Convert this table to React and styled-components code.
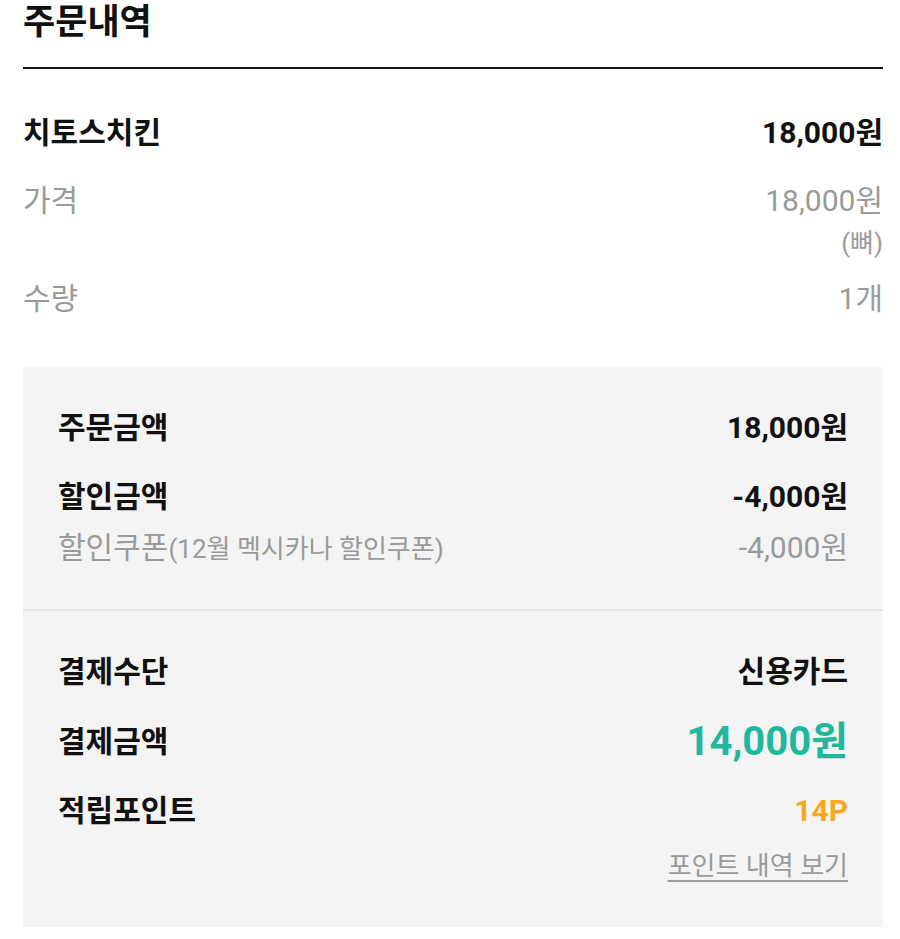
import React from "react";
import styled, { createGlobalStyle } from "styled-components";

const Global = createGlobalStyle`
  html, body { margin: 0; padding: 0; background: #fff; }
  body { font-family: Roboto, "Noto Sans CJK KR", sans-serif; color: #111; }
  * { box-sizing: border-box; }
`;

const Page = styled.div`
  padding: 0 17px 0 23px;
  width: 900px;
`;

const Header = styled.div`
  padding-bottom: 21px;
  border-bottom: 2px solid #141414;
`;

const Title = styled.h1`
  margin: 0;
  font-size: 35px;
  line-height: 46px;
  font-weight: 700;
  color: #111;
`;

const Items = styled.div`
  display: flex;
  flex-direction: column;
  padding: 44px 0 48px;
`;

const Row = styled.div`
  display: flex;
  justify-content: space-between;
  align-items: flex-start;
  margin-top: ${(p) => p.$mt || 0}px;
`;

const Label = styled.div`
  font-size: ${(p) => p.$size || 30}px;
  line-height: ${(p) => p.$lh || 40}px;
  font-weight: ${(p) => (p.$bold ? 700 : 400)};
  color: ${(p) => (p.$muted ? "#9a9a9a" : "#111")};
  white-space: nowrap;
`;

const Small = styled.span`
  font-size: 26px;
`;

const ValueCol = styled.div`
  display: flex;
  flex-direction: column;
  align-items: flex-end;
`;

const Value = styled.div`
  font-size: ${(p) => p.$size || 30}px;
  line-height: ${(p) => p.$lh || 40}px;
  font-weight: ${(p) => (p.$bold ? 700 : 400)};
  color: ${(p) => p.$color || "#111"};
  text-align: right;
  white-space: nowrap;
  margin-top: ${(p) => p.$mt || 0}px;
`;

const Box = styled.div`
  background: #f4f4f4;
`;

const Section = styled.div`
  padding: ${(p) => p.$pad};
  display: flex;
  flex-direction: column;
  & + & {
    border-top: 2px solid #e6e6e6;
  }
`;

const Link = styled.a`
  align-self: flex-end;
  font-size: 26px;
  line-height: 36px;
  color: #9a9a9a;
  text-decoration: underline;
  text-underline-offset: 5px;
  text-decoration-thickness: 2px;
  margin-top: 17px;
`;

export default function App() {
  return (
    <>
      <Global />
      <Page>
        <Header>
          <Title>주문내역</Title>
        </Header>
        <Items>
          <Row>
            <Label $bold>치토스치킨</Label>
            <Value $bold>18,000원</Value>
          </Row>
          <Row $mt={28}>
            <Label $muted>가격</Label>
            <ValueCol>
              <Value $color="#9a9a9a">18,000원</Value>
              <Value $color="#9a9a9a" $size={26} $lh={36} $mt={4}>(뼈)</Value>
            </ValueCol>
          </Row>
          <Row $mt={18}>
            <Label $muted>수량</Label>
            <Value $color="#9a9a9a">1개</Value>
          </Row>
        </Items>
        <Box>
          <Section $pad="41px 35px 42px">
            <Row>
              <Label $bold>주문금액</Label>
              <Value $bold>18,000원</Value>
            </Row>
            <Row $mt={29}>
              <Label $bold>할인금액</Label>
              <Value $bold>-4,000원</Value>
            </Row>
            <Row $mt={13}>
              <Label $muted $lh={36}>
                할인쿠폰<Small>(12월 멕시카나 할인쿠폰)</Small>
              </Label>
              <Value $color="#9a9a9a" $lh={36}>-4,000원</Value>
            </Row>
          </Section>
          <Section $pad="41px 35px 43px">
            <Row>
              <Label $bold>결제수단</Label>
              <Value $bold>신용카드</Value>
            </Row>
            <Row $mt={30}>
              <Label $bold>결제금액</Label>
              <Value $bold $size={40} $color="#1fb89e">14,000원</Value>
            </Row>
            <Row $mt={29}>
              <Label $bold>적립포인트</Label>
              <Value $bold $size={30} $color="#f7a81b">14P</Value>
            </Row>
            <Link>포인트 내역 보기</Link>
          </Section>
        </Box>
      </Page>
    </>
  );
}
